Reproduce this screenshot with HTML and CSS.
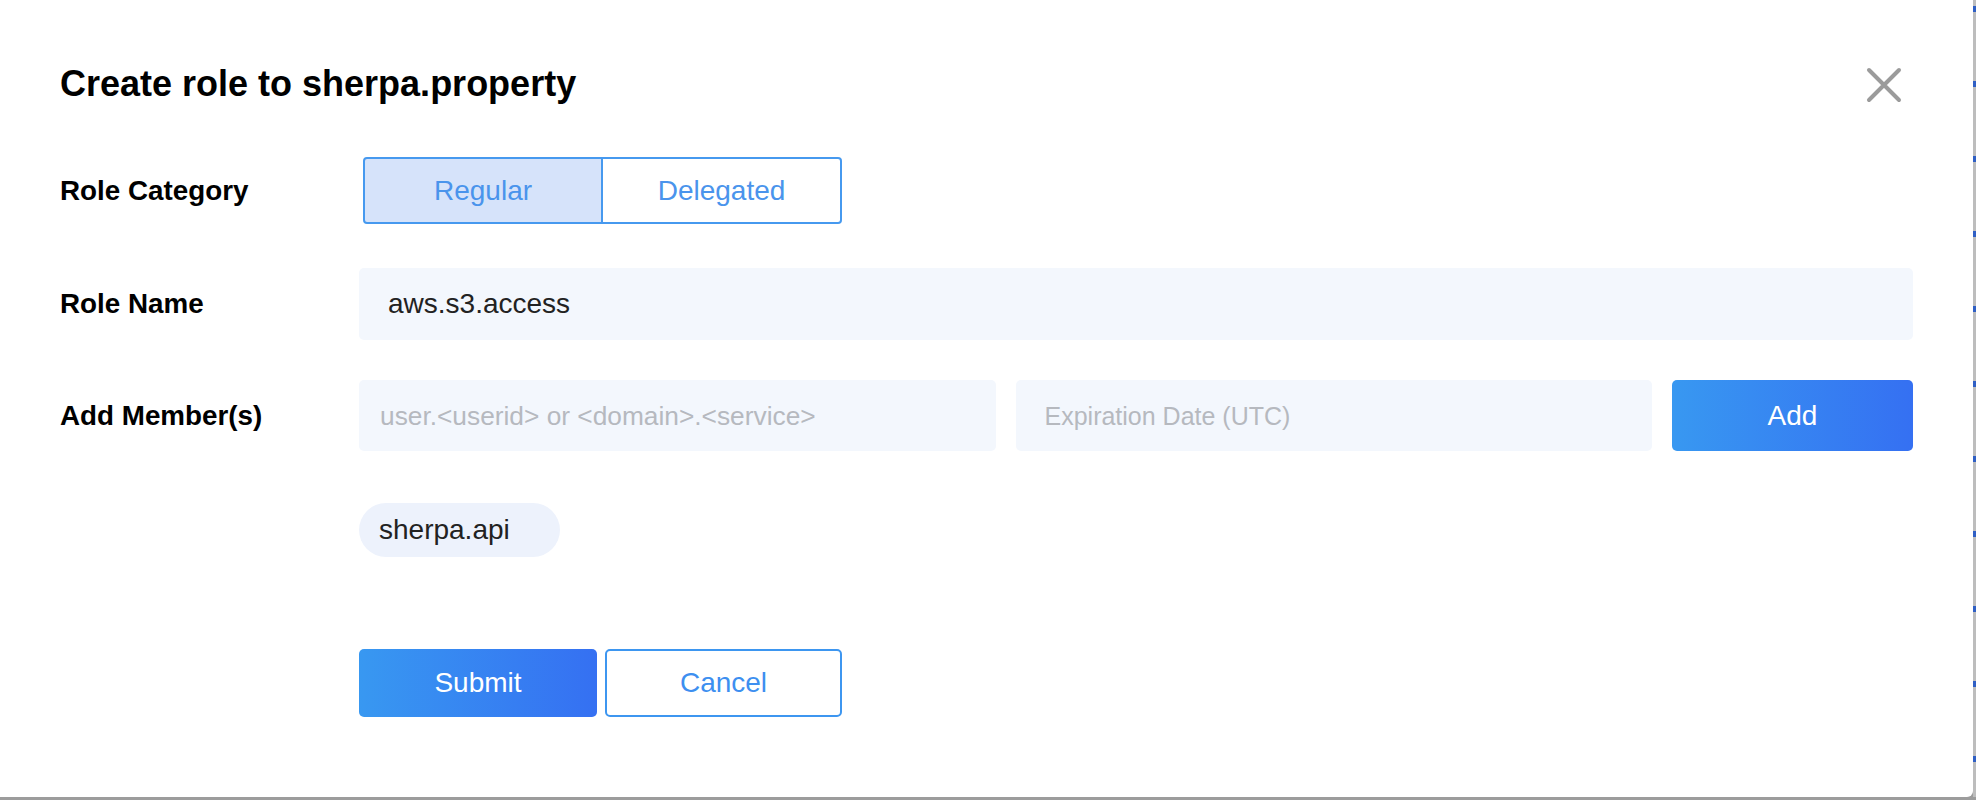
FILE: index.html
```html
<!DOCTYPE html>
<html lang="en">
<head>
<meta charset="utf-8">
<title>Create role</title>
<link rel="stylesheet" href="styles.css">
</head>
<body>
<div class="page">
  <div class="dialog">
    <div class="header">
      <h1 class="title">Create role to sherpa.property</h1>
      <button class="close" aria-label="Close">
        <svg width="36" height="36" viewBox="0 0 36 36"><path d="M3 3 L33 33 M33 3 L3 33" stroke="#9b9b9b" stroke-width="4" stroke-linecap="round" fill="none"/></svg>
      </button>
    </div>
    <div class="row row-category">
      <div class="label">Role Category</div>
      <div class="control">
        <div class="segment">
          <button class="seg seg-active">Regular</button>
          <button class="seg">Delegated</button>
        </div>
      </div>
    </div>
    <div class="row row-name">
      <div class="label">Role Name</div>
      <div class="control">
        <input class="field field-full" type="text" value="aws.s3.access">
      </div>
    </div>
    <div class="row row-members">
      <div class="label">Add Member(s)</div>
      <div class="control member-grid">
        <input class="field field-member" type="text" placeholder="user.&lt;userid&gt; or &lt;domain&gt;.&lt;service&gt;">
        <input class="field field-date" type="text" placeholder="Expiration Date (UTC)">
        <button class="btn btn-primary">Add</button>
      </div>
    </div>
    <div class="row row-chips">
      <div class="label"></div>
      <div class="control">
        <span class="chip">sherpa.api</span>
      </div>
    </div>
    <div class="row row-actions">
      <div class="label"></div>
      <div class="control actions">
        <button class="btn btn-primary btn-action">Submit</button>
        <button class="btn btn-outline btn-action">Cancel</button>
      </div>
    </div>
  </div>
  <div class="edge"></div>
</div>
</body>
</html>
```
FILE: styles.css
```css
html, body {
  margin: 0;
  padding: 0;
}
body {
  background: #9c9c9c;
  font-family: "Liberation Sans", Arial, Helvetica, sans-serif;
  width: 1976px;
  height: 800px;
  overflow: hidden;
}
.page {
  display: flex;
  height: 797px;
}
.dialog {
  width: 1973px;
  height: 797px;
  box-sizing: border-box;
  background: #ffffff;
  border-bottom-right-radius: 6px;
  padding: 63px 60px 0 60px;
}
.edge {
  flex: 1;
  background:
    repeating-linear-gradient(to bottom, transparent 0, transparent 6px, #2f5fc4 6px, #2f5fc4 12px, transparent 12px, transparent 75px),
    #bdbdbd;
}
.header {
  display: flex;
  align-items: center;
  justify-content: space-between;
  height: 42px;
}
.title {
  margin: 0;
  font-size: 36px;
  line-height: 42px;
  font-weight: bold;
  color: #000;
}
.close {
  border: 0;
  background: transparent;
  padding: 0;
  margin-right: 11px;
  margin-top: 2px;
  width: 36px;
  height: 36px;
  display: flex;
}
.row {
  display: flex;
  align-items: center;
}
.label {
  width: 299px;
  flex: none;
  font-size: 27.8px;
  font-weight: bold;
  color: #000;
}
.control {
  flex: 1;
  min-width: 0;
}
.row-category { margin-top: 52px; }
.row-name { margin-top: 44px; }
.row-members { margin-top: 40px; }
.row-chips { margin-top: 52px; }
.row-actions { margin-top: 92px; }

.segment {
  display: flex;
  margin-left: 4px;
  width: 479px;
}
.seg {
  height: 67px;
  box-sizing: border-box;
  border: 2px solid #4699ef;
  background: #ffffff;
  color: #4a94ec;
  font-family: inherit;
  font-size: 28px;
  padding: 0;
}
.seg:first-child {
  width: 240px;
  border-radius: 4px 0 0 4px;
}
.seg:last-child {
  width: 239px;
  border-left: 0;
  border-radius: 0 4px 4px 0;
}
.seg-active {
  background: #d6e3fa;
}

.field {
  box-sizing: border-box;
  height: 71px;
  border: 0;
  border-radius: 5px;
  background: #f3f7fd;
  padding: 0 29px;
  font-family: inherit;
  font-size: 28px;
  color: #222;
  outline: none;
  width: 100%;
}
.field::placeholder {
  color: #b6b9bf;
  font-size: 26px;
}
.field-member {
  padding-left: 21px;
}
.field-member::placeholder {
  font-size: 26.3px;
}
.field-date::placeholder {
  font-size: 25px;
}
.field-full {
  height: 72px;
}
.member-grid {
  display: grid;
  grid-template-columns: 1fr 1fr 241px;
  column-gap: 20px;
}
.btn {
  box-sizing: border-box;
  border-radius: 5px;
  font-family: inherit;
  font-size: 28px;
  padding: 0;
  cursor: pointer;
}
.btn-primary {
  border: 0;
  color: #fff;
  background: linear-gradient(to right, #3898f1, #3570f2);
  height: 71px;
}
.chip {
  display: inline-block;
  height: 54px;
  line-height: 54px;
  border-radius: 27px;
  background: #edf2fc;
  color: #222;
  font-size: 28px;
  padding: 0 50px 0 20px;
}
.actions {
  display: flex;
  gap: 8px;
}
.btn-action {
  width: 238px;
  height: 68px;
}
.btn-outline {
  width: 237px;
  background: #fff;
  color: #3d8ff0;
  border: 2px solid #3d96f0;
}
```
